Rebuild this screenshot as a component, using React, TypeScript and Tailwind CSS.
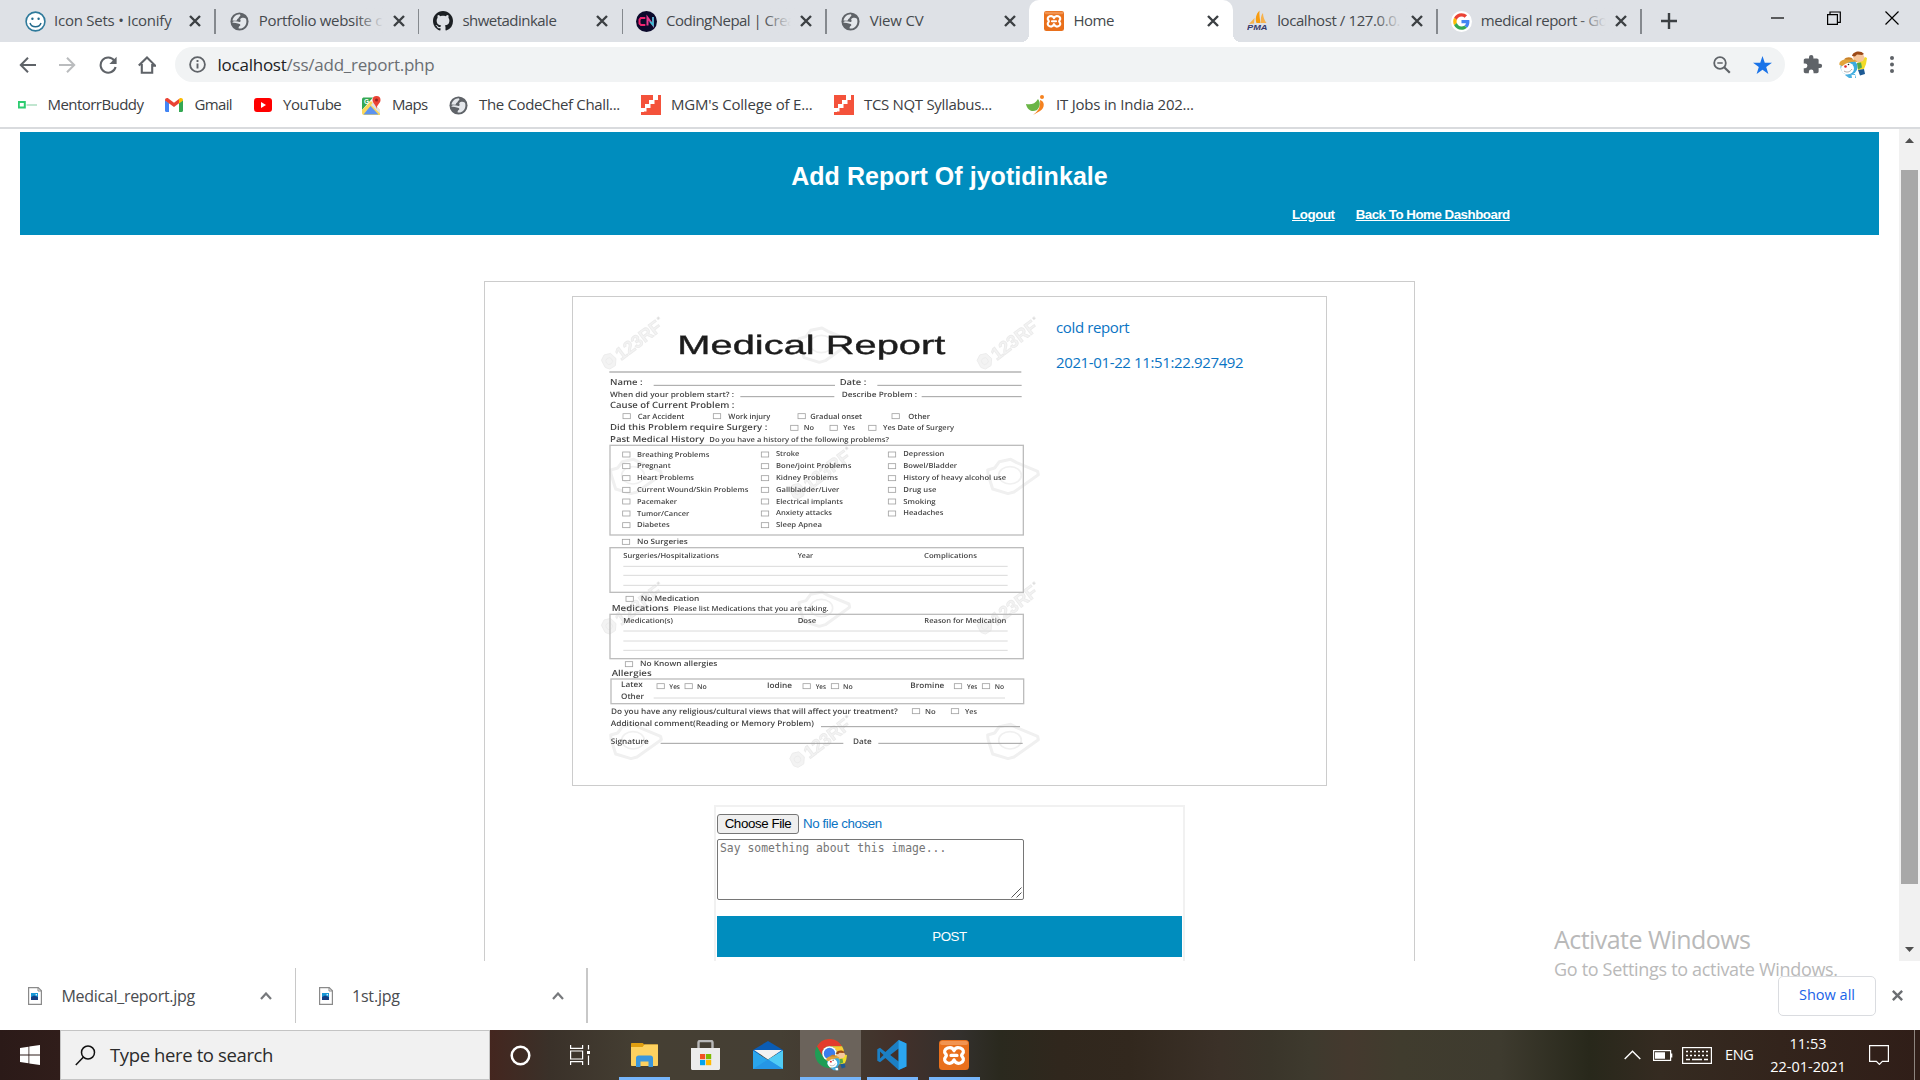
import React, { ReactNode } from "react";

const UI = "font-['Open_Sans',sans-serif]";

/* ---------- small icons ---------- */
const X = ({ s = 14, c = "#3c4043", w = 2.4 }: { s?: number; c?: string; w?: number }) => (
  <svg width={s} height={s} viewBox="0 0 14 14" className="shrink-0" stroke={c} strokeWidth={w} fill="none">
    <path d="M2 2l10 10M12 2L2 12" />
  </svg>
);
const Globe = ({ s = 19 }: { s?: number }) => (
  <svg width={s} height={s} viewBox="0 0 20 20" className="shrink-0">
    <circle cx="10" cy="10" r="9.500" fill="#5f6368" />
    <path d="M2.600 9C3.500 5 6.500 2.400 10.200 2.300c1 .5 1 1.800 0 2.400-1.400.6-.6 2-2 2.400-1.200.4-.4 1.700-1.600 2z" fill="#e4e7eb" />
    <path d="M10.600 7.600c1.600-1.600 4-2 6.200-.6 1.200 3.600.2 7.400-3.200 9.600-1.500.8-3 1-4.400.8-.6-1.400.6-2.600 1.600-3.200.4-1.400-1.200-1.600-2.600-2-1.800-.4-3.400-1-5.600-.7l.4-1.300c2.400-.8 4.800-.2 7 .2 1.400.2 1.400-1.800.6-2.800z" fill="#e4e7eb" />
  </svg>
);
const Smile = () => (
  <svg width="21" height="21" viewBox="0 0 21 21">
    <circle cx="10.500" cy="10.500" r="9.400" fill="#fff" stroke="#2f7a9b" strokeWidth="1.600" />
    <circle cx="7.400" cy="7.800" r="1.200" fill="#226a8c" />
    <circle cx="13.600" cy="7.800" r="1.200" fill="#226a8c" />
    <path d="M5 12c1.500 5 9.500 5 11 0" fill="none" stroke="#226a8c" strokeWidth="1.500" />
  </svg>
);
const Github = () => (
  <svg width="20" height="20" viewBox="0 0 16 16">
    <path fill="#1b1f23" d="M8 0C3.580 0 0 3.580 0 8c0 3.540 2.290 6.530 5.470 7.590.4.070.55-.17.55-.38 0-.19-.01-.82-.01-1.490-2.010.37-2.530-.49-2.690-.94-.09-.23-.48-.94-.82-1.130-.28-.15-.68-.52-.01-.53.63-.01 1.080.58 1.230.82.72 1.210 1.870.87 2.330.66.07-.52.28-.87.51-1.070-1.780-.2-3.640-.89-3.640-3.950 0-.87.31-1.590.82-2.150-.08-.2-.36-1.020.08-2.120 0 0 .67-.21 2.200.82.64-.18 1.320-.27 2-.27s1.360.09 2 .27c1.530-1.040 2.200-.82 2.200-.82.44 1.100.16 1.920.08 2.120.51.56.82 1.270.82 2.150 0 3.070-1.870 3.750-3.650 3.950.29.25.54.73.54 1.480 0 1.070-.01 1.930-.01 2.200 0 .21.15.46.55.38A8.010 8.010 0 0016 8c0-4.420-3.580-8-8-8z" />
  </svg>
);
const CN = () => (
  <svg width="21" height="21" viewBox="0 0 21 21">
    <circle cx="10.500" cy="10.500" r="10.500" fill="#0c0a2c" />
    <path d="M9.300 7H4.800L3.500 8.500v4L5 14h4.300" fill="none" stroke="#f0246f" strokeWidth="2" />
    <path d="M11.500 14.500V6.500l5.500 7.500V6" fill="none" stroke="#e83a8c" strokeWidth="2" />
    <path d="M17 6v8l-3-3.500" fill="none" stroke="#35c4d8" strokeWidth="1.600" />
  </svg>
);
const Xampp = ({ s = 20 }: { s?: number }) => (
  <svg width={s} height={s} viewBox="0 0 30 30">
    <rect width="30" height="30" rx="3.500" fill="#e9701c" />
    <rect x="1" y="1" width="28" height="4" rx="2" fill="#f5a468" opacity=".7" />
    <path d="M15 10.800C13.800 7.600 11 7.200 8.600 8C5.400 9.200 4.800 12 6.600 13.800C7.600 14.900 7.600 15.900 6.600 17C4.800 18.800 5.400 22 8.600 23C11 23.700 13.800 23 15 19.800C16.200 23 19 23.700 21.400 23C24.600 22 25.200 18.800 23.400 17C22.400 15.900 22.400 14.900 23.400 13.800C25.200 12 24.600 9.200 21.400 8C19 7.200 16.200 7.600 15 10.800zM12 15.400h6" fill="none" stroke="#fff" strokeWidth="3.200" strokeLinejoin="round" strokeLinecap="round" />
  </svg>
);
const Pma = () => (
  <svg width="21" height="22" viewBox="0 0 21 22">
    <path d="M9.500 13C8 9 9 4 12.500.5c-.5 4 .5 9 1 12.500z" fill="#f89c0e" />
    <path d="M14 13c-.5-4 0-8 2-10 0 4 1.500 7.500 3.500 10z" fill="#f7b24d" />
    <path d="M2 14l5.500-6-.5 5.500z" fill="#f7b24d" />
    <text x="0" y="19.500" textLength="20.500" lengthAdjust="spacingAndGlyphs" fontFamily="Liberation Sans" fontSize="8" fontWeight="bold" fontStyle="italic" fill="#38396b">PMA</text>
  </svg>
);
const Google = () => (
  <svg width="21" height="21" viewBox="0 0 48 48">
    <circle cx="24" cy="24" r="24" fill="#fff" />
    <g transform="translate(5 5) scale(.79)">
      <path fill="#EA4335" d="M24 9.500c3.540 0 6.710 1.220 9.210 3.600l6.850-6.850C35.900 2.380 30.470 0 24 0 14.620 0 6.510 5.380 2.560 13.220l7.980 6.190C12.430 13.720 17.740 9.500 24 9.500z" />
      <path fill="#4285F4" d="M46.980 24.550c0-1.570-.15-3.090-.38-4.550H24v9.020h12.940c-.58 2.960-2.260 5.480-4.780 7.180l7.730 6c4.510-4.180 7.090-10.360 7.090-17.650z" />
      <path fill="#FBBC05" d="M10.530 28.590c-.48-1.450-.76-2.990-.76-4.590s.27-3.140.76-4.590l-7.980-6.190C.92 16.460 0 20.120 0 24c0 3.880.92 7.540 2.560 10.780l7.970-6.190z" />
      <path fill="#34A853" d="M24 48c6.480 0 11.930-2.130 15.890-5.810l-7.730-6c-2.150 1.450-4.920 2.300-8.160 2.300-6.260 0-11.570-4.220-13.470-9.910l-7.980 6.190C6.510 42.620 14.620 48 24 48z" />
    </g>
  </svg>
);
const Slide = () => (
  <svg width="20" height="20" viewBox="0 0 20 20">
    <rect width="20" height="20" fill="#f4523b" />
    <path d="M0 13h4V9h4V5h4V0h5v5h-3.500v4h-4v4h-4v3.500H3V20H0z" fill="#fff" />
    <path d="M0 0h2v1H0zM0 17h3v3H0z" fill="#f4523b" />
  </svg>
);
const Avatar = ({ s = 28 }: { s?: number }) => (
  <svg width={s} height={s} viewBox="0 0 28 28">
    <path d="M14 6c0-5 8-6 11-1l1 3c0 4-3 5-6 4s-5-2-6-6z" fill="#f7c79c" />
    <path d="M13 5c1-5 9-6 12-2l-2 1-5-.5-2 2z" fill="#9c4a18" />
    <path d="M18 12l6-2 2-4 2 1-1 6-2 5-6 1z" fill="#f2dc28" />
    <path d="M18 12l4-.5 1 5-4 2z" fill="#54a84a" />
    <path d="M19 19l6-1 1 5-5 1.500z" fill="#1d5a94" />
    <ellipse cx="10" cy="16" rx="8.500" ry="8" fill="#3aabdf" />
    <ellipse cx="8.500" cy="17.500" rx="6.500" ry="6" fill="#fff" />
    <path d="M.500 14c-1-4 4-6 9-6s8 1 9 3c-5-.5-11 0-15 4z" fill="#e2a43a" />
    <path d="M5 8.500c2-3 8-3 9 0z" fill="#c98028" />
    <circle cx="6.500" cy="15.500" r="1.300" fill="#e02828" />
    <circle cx="9.500" cy="13.500" r=".8" fill="#222" />
    <path d="M5 20c3 2 6 1 8-2" stroke="#888" strokeWidth=".7" fill="none" />
    <path d="M6 24l10-1 1 4H10z" fill="#4ab0e0" />
    <path d="M12.500 24h3.500v3h-3z" fill="#fff" />
  </svg>
);

/* ---------- tabs ---------- */
type TabData = { icon: ReactNode; label: string; cls: string; active?: boolean; sep?: boolean; fade?: boolean };
const tabs: TabData[] = [
  { icon: <Smile />, label: "Icon Sets • Iconify", cls: "tracking-[-0.240px] ml-[8px]", sep: true },
  { icon: <Globe />, label: "Portfolio website c", cls: "tracking-[-0.3px] ml-[9px]", sep: true, fade: true },
  { icon: <Github />, label: "shwetadinkale", cls: "tracking-[-0.520px] ml-[9px]", sep: true },
  { icon: <CN />, label: "CodingNepal | Crea", cls: "tracking-[-0.520px] ml-[9px]", sep: true, fade: true },
  { icon: <Globe />, label: "View CV", cls: "tracking-[-0.2px] ml-[9px]" },
  { icon: <Xampp />, label: "Home", cls: "tracking-[-0.5px] ml-[9px]", active: true },
  { icon: <Pma />, label: "localhost / 127.0.0.", cls: "tracking-[-0.4px] ml-[9px]", sep: true, fade: true },
  { icon: <Google />, label: "medical report - Go", cls: "tracking-[-0.470px] ml-[9px]", sep: true, fade: true },
];

const Tab = ({ t }: { t: TabData }) => (
  <div className={`relative flex h-[42px] w-[203.700px] shrink-0 items-center pl-[14px] ${t.active ? "rounded-t-[10px] bg-white" : ""}`}>
    <div className="flex w-[21px] justify-center">{t.icon}</div>
    <div className={`mb-[2px] w-[132px] shrink-0 whitespace-nowrap text-[15px] leading-[22px] text-[#45494d] ${t.cls}`}>{t.label}</div>
    <div className="absolute left-[177px] top-[14px]"><X /></div>
    {t.fade && <div className="absolute left-[141px] top-2 h-[26px] w-[35px] bg-gradient-to-r from-transparent to-[#dee1e6] to-80%" />}
    {t.sep && <div className="absolute -right-px top-[9px] h-[25px] w-[1.500px] bg-[#85898e]" />}
    {t.active && (
      <>
        <div className="absolute -left-2 bottom-0 size-2 bg-[radial-gradient(circle_at_0_0,transparent_8px,#fff_8px)]" />
        <div className="absolute -right-2 bottom-0 size-2 bg-[radial-gradient(circle_at_100%_0,transparent_8px,#fff_8px)]" />
      </>
    )}
  </div>
);

const TabStrip = () => (
  <div className="flex h-[42px] bg-[#dee1e6] pl-[11px]">
    {tabs.map((t) => <Tab key={t.label} t={t} />)}
    <div className="flex flex-1 items-center">
      <svg width="16" height="16" viewBox="0 0 16 16" className="ml-[20px]" stroke="#3c4043" strokeWidth="2.400"><path d="M8 0v16M0 8h16" /></svg>
      <svg width="14" height="14" viewBox="0 0 14 14" className="mb-1.5 ml-[94px]" stroke="#000" strokeWidth="1.200"><path d="M0 7h13" /></svg>
      <svg width="14" height="14" viewBox="0 0 14 14" className="mb-1.5 ml-[42px]" stroke="#000" strokeWidth="1.200" fill="none"><path d="M.6 3.600h9.800v9.800H.6zM3 3.500V1h10.300v10.300h-2.700" /></svg>
      <svg width="14" height="14" viewBox="0 0 14 14" className="mb-1.5 ml-[44px]" stroke="#000" strokeWidth="1.200"><path d="M.5.5l13 13M13.500.5l-13 13" /></svg>
    </div>
  </div>
);

/* ---------- toolbar ---------- */
const Toolbar = () => (
  <div className="flex h-[45px] items-center pl-[19px]">
    <svg width="17" height="16" viewBox="0 0 17 16" stroke="#5f6368" strokeWidth="2" fill="none"><path d="M17 8H2M9 .8L1.800 8 9 15.200" /></svg>
    <svg width="17" height="16" viewBox="0 0 17 16" className="ml-[23px]" stroke="#babcbe" strokeWidth="2" fill="none"><path d="M0 8h15M8 .8L15.200 8 8 15.200" /></svg>
    <svg width="18" height="18" viewBox="0 0 18 18" className="ml-[23px]" fill="none"><path d="M15.300 4.500A7.600 7.600 0 1 0 16.600 11" stroke="#5f6368" strokeWidth="2.100" /><path d="M17.600.8v7.200h-7.200z" fill="#5f6368" /></svg>
    <svg width="18" height="18" viewBox="0 0 18 18" className="ml-[21px]" stroke="#5f6368" strokeWidth="2.100" fill="none"><path d="M3.800 8v8.700h10.400V8M.8 9.600L9 1.500l8.200 8.100H14" /></svg>
    <div className="ml-[19px] flex h-[35px] w-[1610px] items-center rounded-full bg-[#f1f3f4] pl-[14px]">
      <svg width="17" height="17" viewBox="0 0 17 17" fill="none" stroke="#5f6368"><circle cx="8.500" cy="8.500" r="7.400" strokeWidth="1.800" /><path d="M8.500 7.500v5M8.500 4v2" strokeWidth="1.900" /></svg>
      <div className="ml-[11.500px] whitespace-nowrap text-[17px] tracking-[-0.240px] text-[#202124]">localhost<span className="text-[#6a6e73]">/ss/add_report.php</span></div>
      <svg width="18" height="18" viewBox="0 0 18 18" className="ml-auto" fill="none" stroke="#5f6368"><circle cx="7" cy="7" r="5.800" strokeWidth="1.800" /><path d="M11.200 11.200l5.600 5.600" strokeWidth="2.200" /><path d="M4.300 7h5.400" strokeWidth="1.500" /></svg>
      <svg width="19" height="18" viewBox="0 0 20 19" className="ml-[22px] mr-[13px]"><path d="M10 0l2.400 7H20l-6.100 4.500L16.200 19 10 14.400 3.800 19l2.300-7.500L0 7h7.600z" fill="#1a73e8" /></svg>
    </div>
    <svg width="21" height="21" viewBox="0 0 24 24" className="mb-px ml-[17px]"><path fill="#5f6368" d="M20.500 11H19V7c0-1.100-.9-2-2-2h-4V3.500a2.500 2.500 0 0 0-5 0V5H4c-1.100 0-2 .9-2 2v3.800h1.500a2.700 2.700 0 0 1 0 5.400H2V20c0 1.100.9 2 2 2h3.800v-1.500a2.700 2.700 0 0 1 5.400 0V22H17c1.100 0 2-.9 2-2v-4h1.500a2.500 2.500 0 0 0 0-5z" /></svg>
    <div className="ml-[16px]"><Avatar /></div>
    <svg width="4" height="17" viewBox="0 0 4 17" className="ml-[23px]" fill="#5f6368"><circle cx="2" cy="2" r="2" /><circle cx="2" cy="8.500" r="2" /><circle cx="2" cy="15" r="2" /></svg>
  </div>
);

/* ---------- bookmarks ---------- */
const marks: { icon: ReactNode; label: string; w: string; t: string }[] = [
  { icon: <svg width="19" height="8" viewBox="0 0 19 8"><rect x=".8" y="1" width="6" height="5.500" fill="none" stroke="#2ecc71" strokeWidth="2" /><path d="M8.500 4H19" stroke="#a7dcbc" strokeWidth="1.400" /></svg>, label: "MentorrBuddy", w: "w-[147px]", t: "tracking-[-0.550px]" },
  { icon: <svg width="18" height="14" viewBox="0 0 18 14"><path d="M0 2v10.800C0 13.500.5 14 1.200 14H4V5z" fill="#4285f4" /><path d="M18 2v10.800c0 .7-.5 1.200-1.200 1.200H14V5z" fill="#34a853" /><path d="M0 2C0 .3 2-.6 3.400.5L9 4.700 14.600.5 14 5.300 9 9 0 2.500z" fill="#ea4335" /><path d="M14 1v4.500l4-3V2c0-1.700-2-2.600-3.400-1.500z" fill="#fbbc04" /></svg>, label: "Gmail", w: "w-[88.500px]", t: "tracking-[-0.650px]" },
  { icon: <svg width="18" height="14" viewBox="0 0 18 14"><rect width="18" height="14" rx="3" fill="#f00" /><path d="M7 4l5 3-5 3z" fill="#fff" /></svg>, label: "YouTube", w: "w-[109px]", t: "tracking-[-0.480px]" },
  { icon: <svg width="19" height="19" viewBox="0 0 19 19"><path d="M0 3.500C0 2 1 1.500 2 1.500h9L0 14z" fill="#34a853" /><path d="M0 14L9 5l9 9v5H2c-1 0-2-1-2-2z" fill="#fbd75b" /><path d="M1.500 18.500L8.500 10l8 8.500z" fill="#5b93f0" /><path d="M11 6.500L18 14v3.500L9 9z" fill="#dfe3e6" /><text x="2" y="8" fontSize="6.500" fontFamily="Liberation Sans" fontWeight="bold" fill="#fff">G</text><path d="M14.500 0a4 4 0 0 1 4 4c0 3.500-3.500 4-4 9-.5-5-4-5.500-4-9a4 4 0 0 1 4-4z" fill="#ea4335" /><circle cx="14.500" cy="4" r="1.500" fill="#922" /></svg>, label: "Maps", w: "w-[87px]", t: "tracking-[-0.650px]" },
  { icon: <Globe />, label: "The CodeChef Chall...", w: "w-[192px]", t: "tracking-[-0.350px]" },
  { icon: <Slide />, label: "MGM's College of E...", w: "w-[193px]", t: "tracking-[-0.180px]" },
  { icon: <Slide />, label: "TCS NQT Syllabus...", w: "w-[192px]", t: "tracking-[-0.320px]" },
  { icon: <svg width="20" height="20" viewBox="0 0 20 20"><path d="M0 9c5 1 9 0 12-5 3 4 2 8-1 11-6 3-10-1-11-6z" fill="#6ab547" /><circle cx="16" cy="2" r="2" fill="#f58220" /><path d="M14 5c5 1 5 8 0 11l-7 4c4-3 8-7 7-15z" fill="#f58220" /></svg>, label: "IT Jobs in India 202...", w: "w-[190px]", t: "tracking-[-0.210px]" },
];

const Bookmarks = () => (
  <div className="flex h-[42px] items-center border-b-2 border-[#d9dbde] pb-[4px] pl-[17px]">
    {marks.map((m) => (
      <div key={m.label} className={`flex shrink-0 items-center ${m.w}`}>
        <div className="flex w-[20px] shrink-0 justify-center">{m.icon}</div>
        <span className={`mb-px ml-[10.500px] whitespace-nowrap text-[15px] text-[#3c4043] ${m.t}`}>{m.label}</span>
      </div>
    ))}
  </div>
);

/* ---------- scanned report ---------- */
const L = ({ a, b, y, t, s = 21 }: { a: number; b: number; y: number; t: string; s?: number }) => (
  <text x={a} y={y} textLength={b - a} lengthAdjust="spacingAndGlyphs" fontSize={s + 2} fontWeight="600" fill="#444">{t}</text>
);
const boxes: [number, number][] = [
  [110, 348], [381, 348], [635, 348], [917, 348], [613, 383], [731, 383], [847, 383],
  ...[463, 498, 534, 569, 604, 640, 675].flatMap((y, i) => (i < 6 ? [[109, y], [525, y], [906, y]] : [[109, y], [525, y]]) as [number, number][]),
  [108, 725], [119, 896], [117, 1092], [212, 1158], [296, 1158], [650, 1158], [735, 1158], [1104, 1158], [1188, 1158], [978, 1233], [1095, 1233],
];
const rules: [number, number, number, number][] = [
  [58, 1294, 216, 1], [191, 735, 256, 0], [862, 1295, 256, 0], [451, 733, 290, 0], [995, 1295, 290, 0],
  [100, 1253, 799, 2], [100, 1253, 826, 2], [100, 1253, 856, 2], [100, 1253, 993, 2], [100, 1253, 1023, 2], [100, 1253, 1051, 2],
  [191, 1245, 1194, 2], [693, 1290, 1280, 0], [212, 760, 1330, 0], [865, 1298, 1330, 0],
];
const texts: [number, number, number, string, number?][] = [
  [60, 158, 254, "Name :", 23], [749, 829, 254, "Date :", 23],
  [60, 432, 290, "When did your problem start? :", 20], [755, 981, 290, "Describe Problem :", 20],
  [60, 433, 325, "Cause of Current Problem :", 24],
  [143, 283, 356, "Car Accident", 20], [415, 541, 356, "Work injury", 20], [661, 816, 356, "Gradual onset", 20], [955, 1020, 356, "Other", 20],
  [60, 532, 390, "Did this Problem require Surgery :", 23], [641, 672, 390, "No", 19], [760, 795, 390, "Yes", 19], [879, 1092, 390, "Yes Date of Surgery", 19],
  [60, 343, 426, "Past Medical History", 23], [358, 897, 426, "Do you have a history of the following problems?", 19],
  [141, 358, 470, "Breathing Problems", 19], [141, 242, 505, "Pregnant", 19], [141, 312, 541, "Heart Problems", 19], [141, 475, 576, "Current Wound/Skin Problems", 19], [141, 261, 611, "Pacemaker", 19], [141, 298, 647, "Tumor/Cancer", 19], [141, 239, 682, "Diabetes", 19],
  [558, 628, 469, "Stroke", 19], [558, 784, 505, "Bone/joint Problems", 19], [558, 744, 540, "Kidney Problems", 19], [558, 748, 575, "Gallbladder/Liver", 19], [558, 759, 611, "Electrical implants", 19], [558, 726, 646, "Anxiety attacks", 19], [558, 696, 681, "Sleep Apnea", 19],
  [940, 1063, 469, "Depression", 19], [940, 1101, 504, "Bowel/Bladder", 19], [940, 1248, 540, "History of heavy alcohol use", 19], [940, 1039, 576, "Drug use", 19], [940, 1037, 611, "Smoking", 19], [940, 1060, 646, "Headaches", 19],
  [141, 293, 732, "No Surgeries", 20],
  [100, 387, 773, "Surgeries/Hospitalizations", 19], [623, 669, 773, "Year", 19], [1002, 1161, 773, "Complications", 19],
  [152, 328, 904, "No Medication", 20], [65, 236, 932, "Medications", 23], [250, 716, 933, "Please list Medications that you are taking.", 19],
  [100, 249, 968, "Medication(s)", 19], [623, 679, 968, "Dose", 19], [1003, 1249, 968, "Reason for Medication", 19],
  [150, 382, 1099, "No Known allergies", 20], [65, 185, 1128, "Allergies", 23],
  [93, 158, 1161, "Latex", 21], [93, 162, 1196, "Other", 21], [238, 270, 1166, "Yes", 18], [321, 350, 1166, "No", 18],
  [531, 606, 1165, "Iodine", 21], [677, 708, 1166, "Yes", 18], [759, 788, 1166, "No", 18],
  [961, 1063, 1165, "Bromine", 21], [1131, 1162, 1166, "Yes", 18], [1214, 1242, 1166, "No", 18],
  [63, 923, 1241, "Do you have any religious/cultural views that will affect your treatment?", 21], [1005, 1037, 1241, "No", 19], [1125, 1161, 1241, "Yes", 19],
  [62, 672, 1279, "Additional comment(Reading or Memory Problem)", 21],
  [62, 176, 1331, "Signature", 21], [789, 845, 1331, "Date", 21],
];
const stamps: [number, number][] = [[125, 135], [1252, 135], [690, 525], [125, 930], [1252, 930], [690, 1330]];
const cameras: [number, number][] = [[700, 136], [135, 530], [1266, 530], [700, 928], [135, 1325], [1266, 1325]];

const ReportScan = () => (
  <svg width="460" height="480" viewBox="0 0 1380 1440" className="mt-[3px] shrink-0 blur-[0.400px]" fontFamily="Open Sans" textRendering="geometricPrecision">
    {stamps.map(([x, y]) => (
      <g key={`${x}-${y}`} transform={`translate(${x} ${y}) rotate(-37)`} fill="#f3f3f3" stroke="#ebebeb" strokeWidth="2.500">
        <path d="M-104 6L-100-18-84-26-66-18-62 4-76 20-96 18z" />
        <circle cx="-83" cy="-2" r="10" />
        <text x="-54" y="19" textLength="158" lengthAdjust="spacingAndGlyphs" fontFamily="Liberation Sans" fontWeight="bold" fontSize="54">123RF</text>
        <circle cx="112" cy="-16" r="4" fill="#ddd" />
      </g>
    ))}
    {cameras.map(([x, y]) => (
      <g key={`${x}-${y}`} transform={`translate(${x} ${y})`} fill="none" stroke="#f0f0f0" strokeWidth="9" strokeLinejoin="round">
        <path d="M-73-20L-52-26-38-45-4-52 14-42 77-16 79-6 6 46-12 51-58 37-72-8z" />
        <ellipse cx="-6" cy="-4" rx="34" ry="26" strokeWidth="5" />
      </g>
    ))}
    <text x="262" y="163" textLength="804" lengthAdjust="spacingAndGlyphs" fontFamily="Liberation Sans" fontSize="80" fill="#1c1c1c" stroke="#1c1c1c" strokeWidth="1.200">Medical Report</text>
    <g fill="none" stroke="#bdbdbd" strokeWidth="4">
      <rect x="60" y="436" width="1240" height="269" />
      <rect x="60" y="743" width="1240" height="134" />
      <rect x="60" y="943" width="1240" height="133" />
      <rect x="63" y="1137" width="1238" height="74" />
    </g>
    {rules.map(([a, b, y, k], i) => (
      <path key={i} d={`M${a} ${y}H${b}`} stroke={k === 2 ? "#dadada" : k === 1 ? "#8f8f8f" : "#a0a0a0"} strokeWidth="3" />
    ))}
    {boxes.map(([x, y], i) => <rect key={i} x={x - 11} y={y - 7} width="22" height="15" fill="#fff" stroke="#a0a0a0" strokeWidth="2.400" />)}
    {texts.map(([a, b, y, t, s], i) => <L key={i} a={a} b={b} y={y} t={t} s={s} />)}
  </svg>
);

/* ---------- page ---------- */
const Page = () => (
  <div className="flex h-[832px] overflow-hidden">
    <div className="flex-1 overflow-hidden px-5 pt-[3px]">
      <div className="flex h-[103px] flex-col bg-[#008dbe] font-['Liberation_Sans',sans-serif] font-bold text-white">
        <h1 className="mt-[28px] text-center text-[25px] leading-[32px] tracking-[0.050px]">Add Report Of jyotidinkale</h1>
        <div className="mt-[15px] flex gap-[21px] pl-[1272px] text-[13.330px] leading-[16px] underline">
          <span className="tracking-[-0.420px]">Logout</span>
          <span className="tracking-[-0.490px]">Back To Home Dashboard</span>
        </div>
      </div>
      <div className="mx-auto mt-[46px] h-[720px] w-[931px] border border-[#ccc] pt-[14px]">
        <div className="mx-auto flex h-[490px] w-[755px] border border-[#ccc] pl-[17px]">
          <ReportScan />
          <div className="ml-[6px] pt-[18px] text-[15px] leading-[24px] text-[#0a74c4]">
            <p className="tracking-[-0.370px]">cold report</p>
            <p className="mt-[11px] whitespace-nowrap tracking-[-0.370px]">2021-01-22 11:51:22.927492</p>
          </div>
        </div>
        <div className="mx-auto mt-[19px] h-[200px] w-[471px] border-2 border-[#f1f1f1] px-px pt-[7px] font-['Liberation_Sans',sans-serif]">
          <div className="flex h-[20px] items-center text-[13.330px]">
            <button className="h-[20px] w-[82px] whitespace-nowrap rounded-[3px] border border-[#767676] bg-[#efefef] leading-[18px] tracking-[-0.4px] text-black">Choose File</button>
            <span className="ml-[4px] tracking-[-0.4px] text-[#0a74c4]">No file chosen</span>
          </div>
          <div className="relative mt-[5px] h-[61px] w-[307px] rounded-[2px] border border-[#767676] px-[2px] font-['DejaVu_Sans_Mono',monospace] text-[11.400px] leading-[17px] text-[#757575]">
            Say something about this image...
            <svg width="11" height="11" viewBox="0 0 11 11" className="absolute bottom-px right-px" stroke="#555" strokeWidth="1"><path d="M.5 10.500l10-10M5.500 10.500l5-5" /></svg>
          </div>
          <div className="mt-[16px] flex h-[41px] w-[465px] items-center justify-center bg-[#008dbe] text-[13.330px] tracking-[-0.4px] text-white">POST</div>
        </div>
      </div>
    </div>
    <div className="flex w-[21px] flex-col items-center bg-[#f1f1f1]">
      <svg width="9" height="5" viewBox="0 0 9 5" className="mt-[9px]"><path d="M0 5h9L4.500 0z" fill="#505050" /></svg>
      <div className="mt-[27px] h-[714px] w-[17px] bg-[#a8a8a8]" />
      <svg width="9" height="5" viewBox="0 0 9 5" className="mt-[63px]"><path d="M0 0h9L4.500 5z" fill="#505050" /></svg>
    </div>
  </div>
);

/* ---------- downloads ---------- */
const FileIcon = () => (
  <svg width="14" height="18" viewBox="0 0 14 18"><path d="M.6.600h9.600l3.200 3.200v13.600H.6z" fill="#fff" stroke="#8a8a8a" strokeWidth="1.200" /><path d="M10 .6v3.400h3.400" fill="none" stroke="#8a8a8a" /><rect x="3" y="6" width="7" height="7" fill="#1698d8" /><path d="M3 13V10l3-1.500L10 10v3z" fill="#153e83" /><circle cx="8.300" cy="7.700" r=".8" fill="#fff" /></svg>
);
const Up = () => (
  <svg width="12" height="8" viewBox="0 0 12 8" fill="none" stroke="#77797c" strokeWidth="2.200"><path d="M1 7l5-5.500L11 7" /></svg>
);
const Downloads = () => (
  <div className="relative flex h-[69px] items-center bg-white text-[16px] text-[#4a4c50]">
    <div className="flex h-[55px] w-[296px] items-center border-r border-[#c8c8c8] pl-[28px]">
      <FileIcon /><span className="ml-[19.500px] flex-1 tracking-[-0.3px]">Medical_report.jpg</span><span className="mr-[23px]"><Up /></span>
    </div>
    <div className="flex h-[55px] w-[292px] items-center border-r-2 border-[#c8c8c8] pl-[23px]">
      <FileIcon /><span className="ml-[19px] flex-1 tracking-[-0.2px]">1st.jpg</span><span className="mr-[22px]"><Up /></span>
    </div>
    <div className="ml-auto flex h-[40px] w-[98px] items-center justify-center rounded-[5px] border border-[#dadce0] pb-[2px] text-[14.500px] font-medium tracking-[0px] text-[#1a63e8]">Show all</div>
    <div className="ml-[15px] mr-[16px]"><X s={13} c="#6b6e72" w={2.600} /></div>
    <div className="absolute left-[1554px] top-[-39px] whitespace-nowrap text-[#b9b9b9]">
      <p className="text-[25px] leading-[34px] tracking-[-0.550px]">Activate Windows</p>
      <p className="text-[18px] leading-[26px] tracking-[-0.320px]">Go to Settings to activate Windows.</p>
    </div>
  </div>
);

/* ---------- taskbar ---------- */
const Task = ({ children, w, bar, active }: { children: ReactNode; w: string; bar?: string; active?: boolean }) => (
  <div className={`relative flex h-full items-center justify-center ${w} ${active ? "bg-[#6b635b]" : ""}`}>
    {children}
    {bar && <div className={`absolute bottom-0 h-[3px] bg-[#76b5fa] ${bar}`} />}
  </div>
);
const Taskbar = () => (
  <div className="flex h-[50px] items-center bg-[linear-gradient(90deg,#2b1a18_0,#301d1a_60px,#44261f_490px,#3a3129_550px,#453f33_640px,#453f34_780px,#42372e_860px,#42302a_900px,#33302d_960px,#2a291e_1000px,#30271d_1060px,#32281e_1130px,#3b3128_1220px,#3a352a_1270px,#3e3a2e_1310px,#44392e_1350px,#403c2e_1400px,#3e3b2f_1500px,#28281b_1590px,#352b21_1660px,#33241c_1780px,#301e18_1920px)] text-white">
    <div className="flex w-[60px] justify-center"><svg width="20" height="20" viewBox="0 0 20 20" fill="#fff"><path d="M0 3l8.500-1.200v7.700H0zM9.300 1.600L20 0v9.500H9.300zM0 10.400h8.500v7.800L0 17zM9.300 10.400H20V20L9.300 18.400z" /></svg></div>
    <div className="flex h-full w-[430px] items-center border border-[#c4c4c4] bg-[#f1f1f1] pl-[14px]">
      <svg width="21" height="21" viewBox="0 0 21 21" fill="none" stroke="#111" strokeWidth="1.500"><circle cx="13" cy="7.500" r="6.500" /><path d="M8.500 12L.8 20" /></svg>
      <span className="ml-[14px] text-[18.500px] tracking-[-0.380px] text-[#2b2b2b]">Type here to search</span>
    </div>
    <Task w="w-[60px]"><svg width="21" height="21" viewBox="0 0 21 21"><circle cx="10.500" cy="10.500" r="8.800" fill="none" stroke="#fff" strokeWidth="2.500" /></svg></Task>
    <Task w="w-[60px]"><svg width="21" height="20" viewBox="0 0 21 20" fill="none" stroke="#fff" strokeWidth="1.200"><path d="M.6 0v3.400h12V0M.6 20v-3.400h12V20M.6 6h12v8H.6zM18.500 0v4.500M18.500 10.500V20" /><path d="M17 6h3v3h-3z" fill="#fff" stroke="none" /></svg></Task>
    <Task w="w-[69px]" bar="left-[9px] w-[51px]"><svg width="27" height="24" viewBox="0 0 27 24" className="ml-[-1px]"><path d="M0 1c0-.6.400-1 1-1h10.500c1 0 1 1.500 2 1.500H26c.6 0 1 .4 1 1V10H0z" fill="#e09e10" /><path d="M0 4h11.500l2-2.500H27V22c0 .5-.4 1-1 1H1c-.6 0-1-.5-1-1z" fill="#fdd15f" /><path d="M5 24v-9c0-1.500 1-2.500 2.500-2.500h12c1.500 0 2.500 1 2.500 2.500v9h-4.500v-5.500h-8V24z" fill="#3b97dc" /></svg></Task>
    <Task w="w-[61px]"><svg width="29" height="30" viewBox="0 0 29 30" className="ml-[-8px]"><path d="M7.500 9V2.500C7.500 1.500 8 1 9 1h11c1 0 1.500.5 1.500 1.500V9" fill="none" stroke="#b8b8b8" strokeWidth="2.400" /><path d="M0 8h29v20.500c0 .8-.6 1.500-1.500 1.500h-26C.6 30 0 29.300 0 28.500z" fill="#ececec" /><path d="M9 14h5.200v5.200H9z" fill="#f25022" /><path d="M15 14h5.200v5.200H15z" fill="#7fba00" /><path d="M9 20h5.200v5.200H9z" fill="#00a4ef" /><path d="M15 20h5.200v5.200H15z" fill="#ffb900" /></svg></Task>
    <Task w="w-[60px]"><svg width="30" height="28" viewBox="0 0 30 28" className="ml-[-4px]"><path d="M0 9L15 0l15 9v4H0z" fill="#0a5cb4" /><path d="M0 9.500l15 9.500L30 9.500V28H0z" fill="#2aa5ec" /><path d="M1 9h28L15 18.500z" fill="#f2f2f2" /><path d="M15 18.500L30 9.500V28z" fill="#50ccf5" /><path d="M0 28h30L15 18.500z" fill="#2596e6" /></svg></Task>
    <Task w="w-[61px]" bar="inset-x-0" active>
      <div className="relative size-[32px]">
        <svg width="29" height="29" viewBox="0 0 48 48"><circle cx="24" cy="24" r="24" fill="#1f9d55" /><path d="M3.200 12A24 24 0 0 1 44.800 12H24a12 12 0 0 0-10.400 18z" fill="#e23b2e" /><path d="M44.800 12A24 24 0 0 1 24 48l10.400-18A12 12 0 0 0 24 12z" fill="#fcc934" /><circle cx="24" cy="24" r="12" fill="#fff" /><circle cx="24" cy="24" r="9.500" fill="#3b7ded" /></svg>
        <div className="absolute left-[11px] top-[11px]"><Avatar s={21} /></div>
      </div>
    </Task>
    <Task w="w-[62px]" bar="left-[6px] w-[51px]"><svg width="30" height="30" viewBox="0 0 100 100"><path d="M72 0L98 12v76L72 100 28 60 10 74 1 69V31l9-5 18 14zM72 28L44 50l28 22zM10 38v24l12-12z" fill="#1c7fc4" fillRule="evenodd" /><path d="M72 0L98 12v76L72 100z" fill="#2ba5f0" /></svg></Task>
    <Task w="w-[62px]" bar="left-[6px] w-[51px]"><Xampp s={30} /></Task>
    <div className="ml-auto flex h-full items-center text-[14.500px]">
      <svg width="17" height="10" viewBox="0 0 17 10" fill="none" stroke="#fff" strokeWidth="1.400"><path d="M.7 9L8.500 1.200 16.300 9" /></svg>
      <svg width="20" height="11" viewBox="0 0 20 11" className="ml-[12px]"><rect x=".6" y=".6" width="17" height="9.800" fill="none" stroke="#fff" strokeWidth="1.200" /><path d="M2 2.300h10v6.500H2zM18 3.500h1.300v4H18z" fill="#fff" /></svg>
      <svg width="30" height="17" viewBox="0 0 30 17" className="ml-[9px]" fill="none" stroke="#fff"><rect x=".6" y=".6" width="28.800" height="15.800" strokeWidth="1.200" /><path d="M4 4.500h22M4 8.500h22" strokeWidth="1.300" strokeDasharray="2 2" /><path d="M4 12.500h4M10 12.500h10M22 12.500h4" strokeWidth="1.300" /></svg>
      <span className="ml-[13px] w-[30px] tracking-[-0.4px]">ENG</span>
      <div className="ml-[12px] w-[82px] pb-px text-center leading-[23px] tracking-[0px]"><p>11:53</p><p className="whitespace-nowrap">22-01-2021</p></div>
      <svg width="20" height="20" viewBox="0 0 20 20" className="ml-[20px]" fill="none" stroke="#fff" strokeWidth="1.200"><path d="M.6.600h18.800v15.800h-6l-3 3-3-3H.6z" /></svg>
      <div className="ml-[25px] mr-[5px] h-full w-px bg-[#8d857f]" />
    </div>
  </div>
);

export default function App() {
  return (
    <div className={`h-[1080px] w-[1920px] overflow-hidden bg-white ${UI}`}>
      <TabStrip />
      <Toolbar />
      <Bookmarks />
      <Page />
      <Downloads />
      <Taskbar />
    </div>
  );
}
